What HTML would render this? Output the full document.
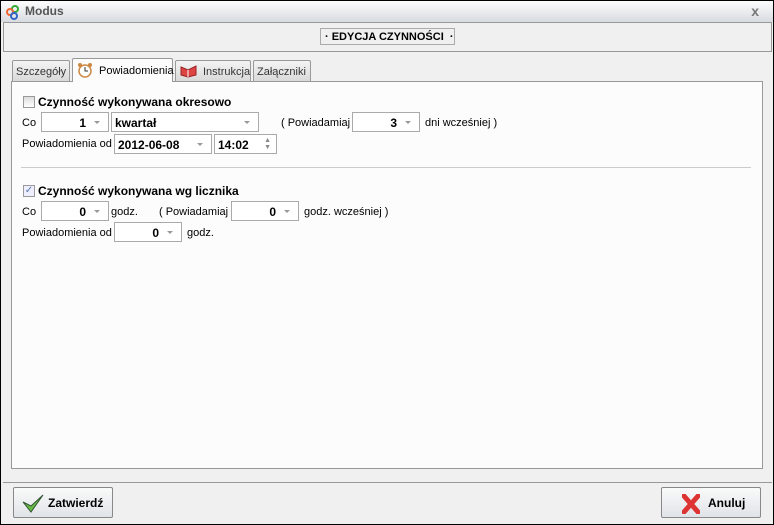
<!DOCTYPE html>
<html><head><style>
*{margin:0;padding:0;box-sizing:border-box}
body{width:774px;height:525px;overflow:hidden;background:#000;font-family:"Liberation Sans",sans-serif;font-size:11px;color:#000;position:relative}
.win{position:absolute;left:1px;top:1px;width:772px;height:523px;background:#f0f0f0}
.title{position:absolute;left:0;top:0;width:772px;height:21px;background:linear-gradient(#fdfdfd,#d8dbe0)}
.title b{position:absolute;left:24px;top:3px;font-size:12px;color:#555;font-weight:bold}
.ab{position:absolute}
.box{position:absolute;border:1px solid #aaa;background:#fff;height:20px}
.box .v{position:absolute;right:22px;top:3px;font-weight:bold;font-size:12px}
.box .arr{position:absolute;right:8px;top:8px;width:0;height:0;border-left:3px solid transparent;border-right:3px solid transparent;border-top:3px solid #999}
.lbl{position:absolute;font-size:11px}
.tab{position:absolute;top:59px;height:22px;border:1px solid #999;border-bottom:none;background:linear-gradient(#f4f4f4,#d8d8d8);font-size:11px;padding:5px 3px 0;color:#333;border-radius:2px 2px 0 0}
.btn{position:absolute;top:486px;height:31px;width:100px;border:1px solid #888;background:linear-gradient(#fafafa,#e0e3e8);border-radius:2px;font-size:12px;font-weight:bold}
</style></head><body><div class="win">
<div class="title"><svg class="ab" style="left:4px;top:3px" width="16" height="16"><circle cx="10" cy="5" r="3" fill="none" stroke="#3a3" stroke-width="2"/><circle cx="5" cy="8" r="3" fill="none" stroke="#e63" stroke-width="2"/><circle cx="9" cy="12" r="3" fill="none" stroke="#36c" stroke-width="2"/></svg><b>Modus</b><span class="ab" style="right:14px;top:2px;color:#777;font-size:14px;font-weight:bold">x</span></div>
<div class="ab" style="left:2px;top:21px;width:769px;height:30px;border:1px solid #999;border-right:1px solid #999"></div>
<div class="ab" style="left:319px;top:27px;width:135px;height:17px;border:1px solid #aaa;font-weight:bold;font-size:11px;padding:2px 0 0 4px">· EDYCJA CZYNNOŚCI &nbsp;·</div>
<div class="tab" style="left:11px;width:58px">Szczegóły</div>
<div class="tab" style="left:71px;width:101px;top:57px;height:24px;background:#fbfcfb;z-index:2;color:#000;padding-left:26px;padding-top:6px"><svg class="ab" style="left:4px;top:3px" width="16" height="16"><circle cx="8" cy="9" r="6" fill="#fff" stroke="#c84" stroke-width="1.5"/><path d="M8 5v4h3" stroke="#333" fill="none"/><circle cx="3" cy="3" r="2" fill="#c84"/><circle cx="13" cy="3" r="2" fill="#c84"/></svg>Powiadomienia</div>
<div class="tab" style="left:174px;width:76px;padding-left:27px"><svg class="ab" style="left:4px;top:3px" width="18" height="14"><path d="M1 3 L8 6 L16 2 L16 11 L8 13 L1 11Z" fill="#d44" stroke="#922"/><path d="M8 6 L8 13" stroke="#fff"/></svg>Instrukcja</div>
<div class="tab" style="left:252px;width:58px">Załączniki</div>
<div class="ab" style="left:10px;top:80px;width:752px;height:388px;border:1px solid #999;background:#fbfcfb"></div>
<div class="ab" style="left:22px;top:95px;width:12px;height:12px;border:1px solid #999;background:linear-gradient(#ddd,#fff)"></div>
<div class="lbl" style="left:37px;top:94px;font-weight:bold;font-size:12px">Czynność wykonywana okresowo</div>
<div class="lbl" style="left:21px;top:116px">Co</div>
<div class="box" style="left:40px;top:111px;width:68px"><span class="v">1</span><span class="arr"></span></div>
<div class="box" style="left:110px;top:111px;width:148px"><span class="v" style="left:3px;right:auto">kwartał</span><span class="arr"></span></div>
<div class="lbl" style="left:280px;top:116px">( Powiadamiaj</div>
<div class="box" style="left:351px;top:111px;width:68px"><span class="v">3</span><span class="arr"></span></div>
<div class="lbl" style="left:424px;top:116px">dni wcześniej )</div>
<div class="lbl" style="left:21px;top:137px">Powiadomienia od</div>
<div class="box" style="left:113px;top:133px;width:98px"><span class="v" style="left:3px;right:auto">2012-06-08</span><span class="arr"></span></div>
<div class="box" style="left:213px;top:133px;width:63px"><span class="v" style="left:3px;right:auto">14:02</span><span class="ab" style="right:5px;top:2px;font-size:7px;color:#888;line-height:7px">▲<br>▼</span></div>
<div class="ab" style="left:20px;top:166px;width:730px;height:1px;background:#ccc"></div>
<div class="ab" style="left:22px;top:184px;width:12px;height:12px;border:1px solid #999;background:#eef;color:#57a;font-size:10px;line-height:10px;text-align:center">✓</div>
<div class="lbl" style="left:37px;top:183px;font-weight:bold;font-size:12px">Czynność wykonywana wg licznika</div>
<div class="lbl" style="left:21px;top:205px">Co</div>
<div class="box" style="left:40px;top:200px;width:68px"><span class="v">0</span><span class="arr"></span></div>
<div class="lbl" style="left:110px;top:205px">godz.</div>
<div class="lbl" style="left:158px;top:205px">( Powiadamiaj</div>
<div class="box" style="left:230px;top:200px;width:68px"><span class="v">0</span><span class="arr"></span></div>
<div class="lbl" style="left:303px;top:205px">godz. wcześniej )</div>
<div class="lbl" style="left:21px;top:226px">Powiadomienia od</div>
<div class="box" style="left:113px;top:221px;width:68px"><span class="v">0</span><span class="arr"></span></div>
<div class="lbl" style="left:186px;top:226px">godz.</div>
<div class="ab" style="left:2px;top:481px;width:769px;height:1px;background:#999"></div>
<div class="btn" style="left:12px"><svg class="ab" style="left:8px;top:6px" width="22" height="20"><path d="M1 8 L9 18 L21 1 L9 12Z" fill="#6b4" stroke="#353"/></svg><span class="ab" style="left:34px;top:8px">Zatwierdź</span></div>
<div class="btn" style="left:660px"><svg class="ab" style="left:20px;top:6px" width="18" height="20"><path d="M2 2 L16 18 M16 2 L2 18" stroke="#d33" stroke-width="5" stroke-linecap="round"/></svg><span class="ab" style="left:46px;top:8px">Anuluj</span></div>
</div></body></html>
